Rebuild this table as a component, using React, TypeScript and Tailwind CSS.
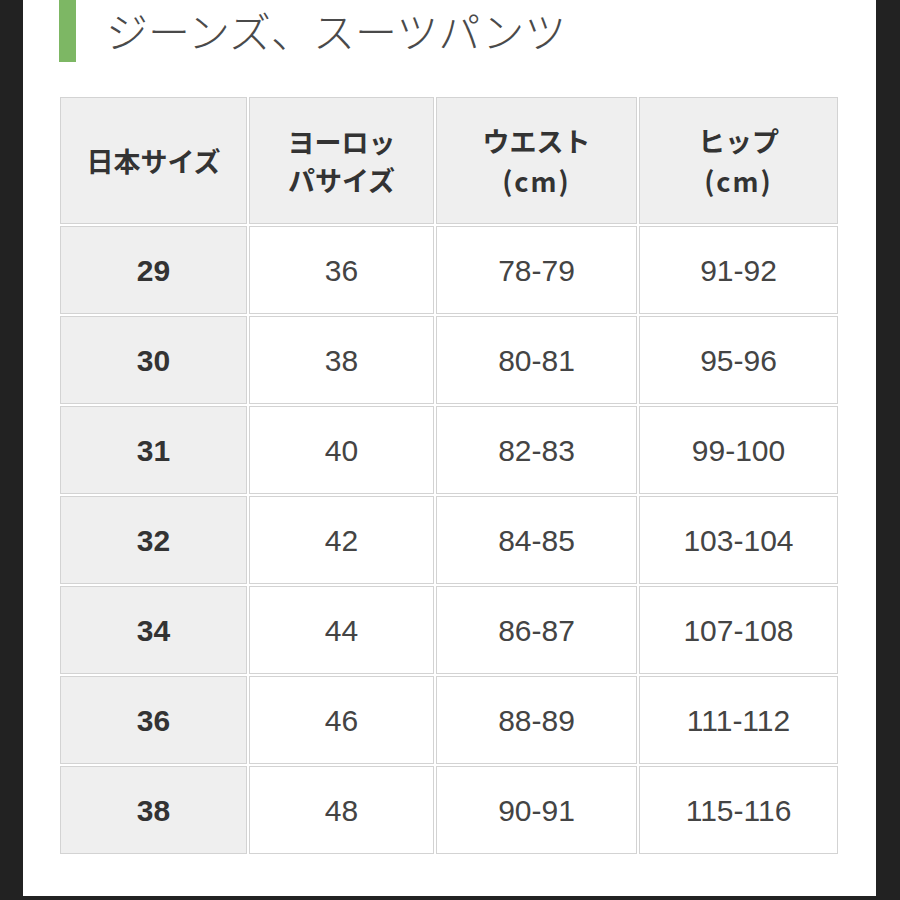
const rows: [string, string, string, string][] = [
  ['29', '36', '78-79', '91-92'],
  ['30', '38', '80-81', '95-96'],
  ['31', '40', '82-83', '99-100'],
  ['32', '42', '84-85', '103-104'],
  ['34', '44', '86-87', '107-108'],
  ['36', '46', '88-89', '111-112'],
  ['38', '48', '90-91', '115-116'],
];

const font = { fontFamily: '"Noto Sans CJK JP", "Noto Sans", sans-serif' };
const digits = { fontFamily: '"Liberation Sans", "Noto Sans CJK JP", sans-serif' };

export default function App() {
  return (
    <div className="w-[900px] h-[900px] bg-[#222222] flex" style={font}>
      <div className="ml-[23px] w-[853px] h-[896px] bg-white flex flex-col">
        {/* Title */}
        <div className="flex items-center pl-[36px] h-[62px]">
          <div className="w-[17px] h-[62px] bg-[#7db764]" />
          <h1 className="ml-[30px] text-[42px] font-light text-[#4a4a4a] leading-none -mt-[3px]">
            ジーンズ、スーツパンツ
          </h1>
        </div>

        {/* Size table */}
        <table className="mt-[33px] ml-[35px] w-[782px] table-fixed border-separate border-spacing-[2px]">
          <thead>
            <tr>
              <th className="w-[187px] h-[127px] bg-[#efefef] border border-[#d3d3d3] text-[27px] font-bold text-[#333] leading-[38px]">
                日本サイズ
              </th>
              <th className="w-[185px] bg-[#efefef] border border-[#d3d3d3] text-[27px] font-bold text-[#333] leading-[38px]">
                ヨーロッ
                <br />
                パサイズ
              </th>
              <th className="w-[201px] bg-[#efefef] border border-[#d3d3d3] text-[27px] font-bold text-[#333] leading-[40px]">
                ウエスト
                <br />
                <span className="tracking-[2px]">(cm)</span>
              </th>
              <th className="w-[199px] bg-[#efefef] border border-[#d3d3d3] text-[27px] font-bold text-[#333] leading-[40px]">
                ヒップ
                <br />
                <span className="tracking-[2px]">(cm)</span>
              </th>
            </tr>
          </thead>
          <tbody style={digits}>
            {rows.map((r) => (
              <tr key={r[0]}>
                <td className="h-[88px] bg-[#efefef] border border-[#d3d3d3] text-center text-[30px] font-bold text-[#333]">
                  {r[0]}
                </td>
                <td className="border border-[#d3d3d3] text-center text-[30px] text-[#444]">{r[1]}</td>
                <td className="border border-[#d3d3d3] text-center text-[30px] text-[#444]">{r[2]}</td>
                <td className="border border-[#d3d3d3] text-center text-[30px] text-[#444]">{r[3]}</td>
              </tr>
            ))}
          </tbody>
        </table>
      </div>
    </div>
  );
}
